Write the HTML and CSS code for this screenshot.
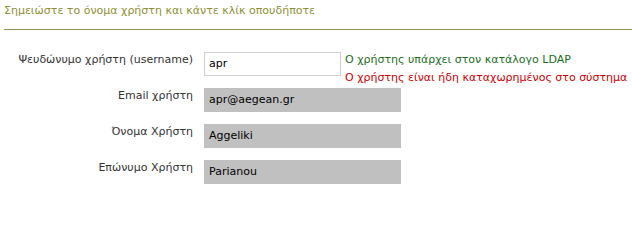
FILE: index.html
```html
<!DOCTYPE html>
<html lang="el">
<head>
<meta charset="utf-8">
<title>Χρήστης</title>
<link rel="stylesheet" href="styles.css">
</head>
<body>
<div class="page">
  <div class="title">Σημειώστε το όνομα χρήστη και κάντε κλίκ οπουδήποτε</div>
  <form class="form">
    <div class="row">
      <label class="label">Ψευδώνυμο χρήστη (username)</label>
      <div class="field input">apr</div>
      <div class="msgs">
        <div class="ok">Ο χρήστης υπάρχει στον κατάλογο LDAP</div>
        <div class="err">Ο χρήστης είναι ήδη καταχωρημένος στο σύστημα</div>
      </div>
    </div>
    <div class="row">
      <label class="label">Email χρήστη</label>
      <div class="field ro">apr@aegean.gr</div>
    </div>
    <div class="row">
      <label class="label">Όνομα Χρήστη</label>
      <div class="field ro">Aggeliki</div>
    </div>
    <div class="row">
      <label class="label">Επώνυμο Χρήστη</label>
      <div class="field ro">Parianou</div>
    </div>
  </form>
</div>
</body>
</html>
```
FILE: styles.css
```css
html, body {
  margin: 0;
  padding: 0;
  background: #ffffff;
}
body {
  font-family: "DejaVu Sans", Verdana, sans-serif;
  font-size: 11px;
  color: #333333;
}
.page {
  padding: 4px 0 0 4px;
}
.title {
  color: #8f8f35;
  line-height: 14px;
  height: 25px;
  border-bottom: 1px solid #8f8f55;
}
.form {
  display: flex;
  flex-direction: column;
  gap: 12px;
  padding-top: 22px;
}
.row {
  display: flex;
  align-items: flex-start;
  height: 24px;
}
.label {
  width: 189px;
  text-align: right;
  padding-top: 1px;
  line-height: 13px;
  margin-right: 11px;
}
.field {
  box-sizing: border-box;
  height: 24px;
  line-height: 14px;
  padding: 5px 4px 0 5px;
  color: #000000;
}
.input {
  width: 137px;
  border: 1px solid #cfcfcf;
  padding-left: 4px;
  padding-top: 4px;
  background: #ffffff;
}
.ro {
  width: 197px;
  background: #c0c0c0;
}
.msgs {
  display: flex;
  flex-direction: column;
  margin-left: 4px;
  line-height: 18px;
  margin-top: -1px;
}
.ok {
  color: #1c6e1c;
}
.err {
  color: #cc0000;
}
```
